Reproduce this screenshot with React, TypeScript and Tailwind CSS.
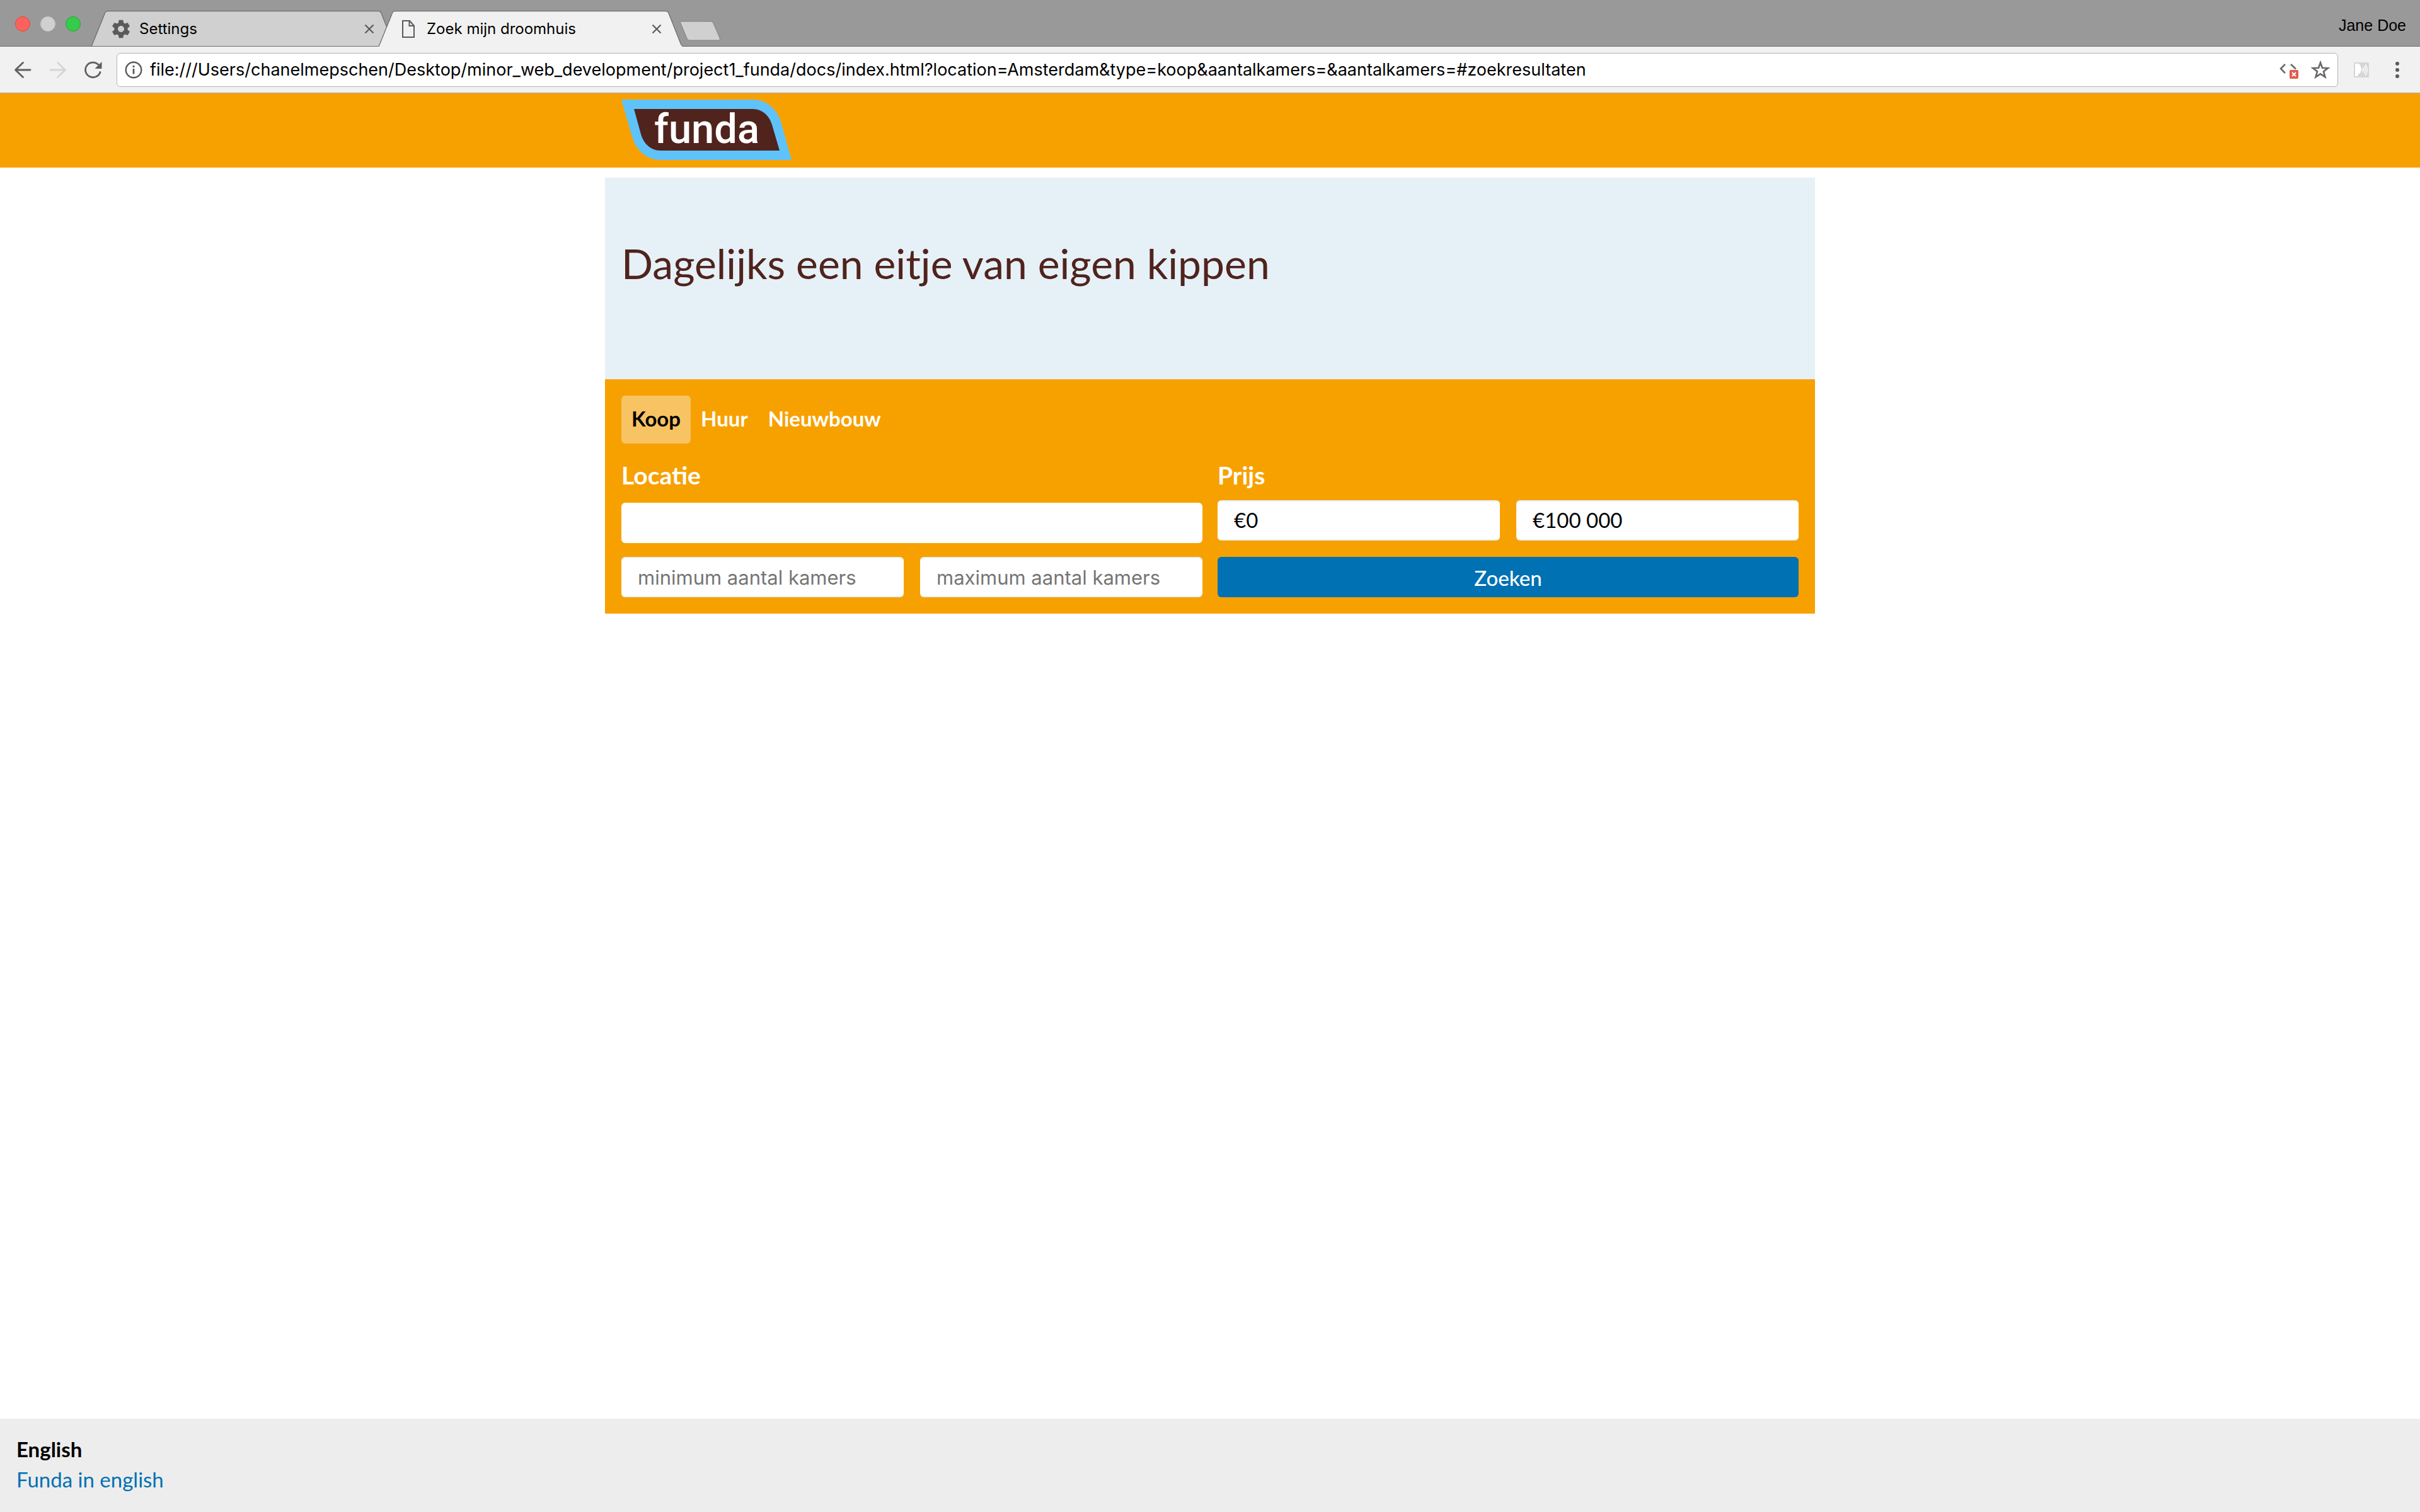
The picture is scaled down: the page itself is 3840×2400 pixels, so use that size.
import React from 'react';

const URL_TEXT =
  'file:///Users/chanelmepschen/Desktop/minor_web_development/project1_funda/docs/index.html?location=Amsterdam&type=koop&aantalkamers=&aantalkamers=#zoekresultaten';

function CloseIcon() {
  return (
    <svg className="size-4" viewBox="0 0 16 16" fill="none" stroke="#5a5a5a" strokeWidth="2.2" aria-hidden="true">
      <path d="M1.5 1.5 14.5 14.5M14.5 1.5 1.5 14.5" />
    </svg>
  );
}

function GearIcon() {
  return (
    <svg className="size-[34px]" viewBox="0 0 24 24" fill="#5a5a5a" aria-hidden="true">
      <path d="M19.43 12.98c.04-.32.07-.64.07-.98s-.03-.66-.07-.98l2.11-1.65c.19-.15.24-.42.12-.64l-2-3.46c-.12-.22-.39-.3-.61-.22l-2.49 1c-.52-.4-1.08-.73-1.69-.98l-.38-2.65C14.46 2.18 14.25 2 14 2h-4c-.25 0-.46.18-.49.42l-.38 2.65c-.61.25-1.17.59-1.69.98l-2.49-1c-.23-.09-.49 0-.61.22l-2 3.46c-.13.22-.07.49.12.64l2.11 1.65c-.04.32-.07.65-.07.98s.03.66.07.98l-2.11 1.65c-.19.15-.24.42-.12.64l2 3.46c.12.22.39.3.61.22l2.49-1c.52.4 1.08.73 1.69.98l.38 2.65c.03.24.24.42.49.42h4c.25 0 .46-.18.49-.42l.38-2.65c.61-.25 1.17-.59 1.69-.98l2.49 1c.23.09.49 0 .61-.22l2-3.46c.12-.22.07-.49-.12-.64l-2.11-1.65zM12 15.5c-1.93 0-3.5-1.57-3.5-3.5s1.57-3.5 3.5-3.5 3.5 1.57 3.5 3.5-1.57 3.5-3.5 3.5z" />
    </svg>
  );
}

function PageIcon() {
  return (
    <svg className="h-7 w-5" viewBox="0 0 20 28" fill="none" stroke="#5a5a5a" strokeWidth="2" aria-hidden="true">
      <path d="M1 1H12L19 9V27H1Z" />
      <path d="M11.5 1V9H19" />
    </svg>
  );
}

type TabProps = { title: string; icon: React.ReactNode; active?: boolean };

function BrowserTab({ title, icon, active }: TabProps) {
  return (
    <div className={active ? 'relative z-10 -ml-7 h-[57px] w-[484px]' : 'relative h-[57px] w-[484px]'}>
      <svg className="absolute inset-0 size-full" viewBox="0 0 484 57" aria-hidden="true">
        <path
          d="M0 57 C2 56 2 54 3 52 L22 5 C23 2 24 .5 28 .5 H456 C460 .5 460 2 461 4 L480 52 C481 54 482 56 484 57 Z"
          fill={active ? '#f1f1f1' : '#d0d0d0'}
        />
        <path
          d="M0 57 C2 56 2 54 3 52 L22 5 C23 2 24 .5 28 .5 H456 C460 .5 460 2 461 4 L480 52 C481 54 482 56 484 57"
          fill="none"
          stroke="#6e6e6e"
          strokeWidth="1.3"
        />
        {!active && <path d="M0 56.5H484" stroke="#6b6b6b" />}
      </svg>
      <div className="relative flex h-full items-center pr-[34px] pl-[31px]">
        <span className="mr-3 flex w-[34px] items-center justify-center">{icon}</span>
        <button type="button" className="flex-1 truncate text-left text-2xl text-black">
          {title}
        </button>
        <button type="button" aria-label={'Close ' + title}>
          <CloseIcon />
        </button>
      </div>
    </div>
  );
}

function TabStrip() {
  return (
    <div className="flex h-[74px] items-end border-b border-[#6b6b6b] bg-[#999999]">
      <div className="mb-[23px] ml-6 flex gap-4">
        <button type="button" aria-label="Close window" className="size-6 rounded-full border border-[#e2463f] bg-[#fc625d]" />
        <button type="button" aria-label="Minimize window" className="size-6 rounded-full border border-[#c4c4c4] bg-[#d0d0d0]" />
        <button type="button" aria-label="Zoom window" className="size-6 rounded-full border border-[#29a835] bg-[#35cb4b]" />
      </div>
      <div className="-mb-px ml-4 flex">
        <BrowserTab title="Settings" icon={<GearIcon />} />
        <BrowserTab title="Zoek mijn droomhuis" icon={<PageIcon />} active />
      </div>
      <button type="button" aria-label="New tab" className="mb-2 -ml-1.5">
        <svg className="h-8 w-[66px]" viewBox="0 0 66 32" aria-hidden="true">
          <path
            d="M3 1H49C52 1 53 2 54 4L64 27C65 30 64 31 62 31H17C14 31 13 30 12 28L2 4C1 2 1 1 3 1Z"
            fill="#d0d0d0"
            stroke="#808080"
          />
        </svg>
      </button>
      <span className="mr-[22px] mb-[17px] ml-auto font-['Liberation_Sans',sans-serif] text-[25px] leading-8 text-black">Jane Doe</span>
    </div>
  );
}

function Toolbar() {
  return (
    <div className="flex h-[74px] items-center border-b border-[#a9a9b1] bg-[#f1f1f1]">
      <div className="flex w-[185px] shrink-0 items-center gap-7 pl-[22px]">
        <button type="button" aria-label="Back">
          <svg className="size-7" viewBox="0 0 28 28" fill="none" stroke="#5f5f5f" strokeWidth="2.8" strokeLinecap="round" strokeLinejoin="round" aria-hidden="true">
            <path d="M14.5 2.5 2.5 14 14.5 25.5M3 14H26" />
          </svg>
        </button>
        <button type="button" aria-label="Forward" disabled>
          <svg className="size-7" viewBox="0 0 28 28" fill="none" stroke="#d5d5d5" strokeWidth="2.8" strokeLinecap="round" strokeLinejoin="round" aria-hidden="true">
            <path d="M13.5 2.5 25.5 14 13.5 25.5M25 14H2" />
          </svg>
        </button>
        <button type="button" aria-label="Reload">
          <svg className="size-7" viewBox="0 0 28 28" aria-hidden="true">
            <path d="M25 17.5A12 11.8 0 1 1 22 5.5" fill="none" stroke="#5f5f5f" strokeWidth="2.8" strokeLinecap="round" />
            <path d="M27.5 1V12H16.5Z" fill="#5f5f5f" />
          </svg>
        </button>
      </div>
      <div className="flex h-[54px] min-w-0 flex-1 items-center rounded-md border border-[#b4b4b4] bg-white px-3">
        <svg className="size-7 shrink-0" viewBox="0 0 28 28" aria-hidden="true">
          <circle cx="14" cy="14" r="12.3" fill="none" stroke="#5a5a5a" strokeWidth="2.4" />
          <path d="M14 12V20.5M14 7V10" stroke="#5a5a5a" strokeWidth="2.8" />
        </svg>
        <input
          aria-label="Address"
          defaultValue={URL_TEXT}
          className="ml-3 min-w-0 flex-1 bg-transparent text-[27px] leading-9 text-black outline-none"
        />
        <button type="button" aria-label="Scripts blocked">
          <svg className="h-7 w-[30px]" viewBox="0 0 30 28" fill="none" aria-hidden="true">
            <path d="M9 5 2 12 9 19" stroke="#6b6b6b" strokeWidth="2.6" />
            <path d="M18 5 26 12.5" stroke="#6b6b6b" strokeWidth="2.6" />
            <rect x="16" y="14" width="14" height="14" rx="2" fill="#e25b4c" />
            <path d="M20 18 26 24M26 18 20 24" stroke="#fff" strokeWidth="2" />
          </svg>
        </button>
        <button type="button" aria-label="Bookmark this page" className="ml-5">
          <svg className="size-[30px]" viewBox="0 0 30 30" fill="none" stroke="#666" strokeWidth="2.6" aria-hidden="true">
            <path d="M15 3.5 18 11.8 27 12.1 20 17.5 22.5 26.3 15 21.4 7.5 26.3 10 17.5 3 12.1 12 11.8Z" />
          </svg>
        </button>
      </div>
      <div className="flex shrink-0 items-center gap-10 pr-8 pl-6">
        <button type="button" aria-label="Reading extension">
          <svg className="size-[26px]" viewBox="0 0 26 26" aria-hidden="true">
            <rect x="1" y="1" width="24" height="24" rx="1.5" fill="#d6d6d6" />
            <path d="M3 3H8C11 4 12 6 12 9L14 13 12 14C12 18 11 19 8 19L7 23H3Z" fill="#fff" />
            <path d="M15 9.5Q17.5 13 15 16.5M17.5 7Q21 13 17.5 19M19.5 4.5Q25 13 19.5 21.5" fill="none" stroke="#fff" strokeWidth="1.5" />
          </svg>
        </button>
        <button type="button" aria-label="Menu">
          <svg className="h-[26px] w-2" viewBox="0 0 8 26" fill="#5a5a5a" aria-hidden="true">
            <circle cx="4" cy="3" r="3" />
            <circle cx="4" cy="13" r="3" />
            <circle cx="4" cy="23" r="3" />
          </svg>
        </button>
      </div>
    </div>
  );
}

function Logo() {
  return (
    <svg className="h-24 w-[270px]" viewBox="0 0 270 96" role="img" aria-label="funda">
      <path d="M0 0H208C231 0 247 16 253 35L270 96H64C38 96 23 79 17 59Z" fill="#5fc3f9" />
      <path d="M20 15H208C224 15 235 26 239 40L251 81H62C46 81 35 69 31 55Z" fill="#50231d" />
      <text x="52" y="69" fill="#fff" className="font-[Roboto,sans-serif] text-[65px] font-medium">
        funda
      </text>
    </svg>
  );
}

const KINDS = ['Koop', 'Huur', 'Nieuwbouw'];

const field =
  'h-16 w-full min-w-0 appearance-none rounded-md border-y-2 border-[#e6f1f7] bg-white px-[26px] outline-none';

const roomsField = field + ' font-[Inter,sans-serif] text-[31px] placeholder:text-[#757575]';

function SearchForm() {
  return (
    <form className="bg-[#f7a100] p-[26px]" onSubmit={(e) => e.preventDefault()}>
      <div role="radiogroup" aria-label="Type" className="mb-[26px] flex">
        {KINDS.map((kind) => (
          <label
            key={kind}
            className="rounded-md px-4 pt-3.5 pb-[18px] text-[33px] leading-[44px] font-bold text-white has-checked:bg-[#f8c363] has-checked:text-black"
          >
            <input type="radio" name="type" value={kind} defaultChecked={kind === 'Koop'} className="sr-only" />
            {kind}
          </label>
        ))}
      </div>
      <div className="grid grid-cols-2 gap-6">
        <div className="flex flex-col">
          <label htmlFor="location" className="mb-5 text-[39px] leading-[48px] font-bold text-white">
            Locatie
          </label>
          <input id="location" className="mb-[22px] h-16 w-full rounded-md bg-white px-[26px] font-[Inter,sans-serif] text-[31px] outline-none" />
          <div className="grid grid-cols-2 gap-[26px]">
            <input aria-label="minimum aantal kamers" placeholder="minimum aantal kamers" className={roomsField} />
            <input aria-label="maximum aantal kamers" placeholder="maximum aantal kamers" className={roomsField} />
          </div>
        </div>
        <div className="flex flex-col">
          <label htmlFor="price-from" className="mb-4 text-[39px] leading-[48px] font-bold text-white">
            Prijs
          </label>
          <div className="mb-[26px] grid grid-cols-2 gap-[26px]">
            <select id="price-from" className={field + ' text-[33px] text-black'}>
              <option>€0</option>
            </select>
            <select aria-label="Prijs tot" className={field + ' text-[33px] text-black'}>
              <option>€100 000</option>
            </select>
          </div>
          <button type="submit" className="h-16 rounded-md bg-[#0071b3] pt-1 text-[33px] font-medium text-white">
            Zoeken
          </button>
        </div>
      </div>
    </form>
  );
}

export default function App() {
  return (
    <div className="flex min-h-screen flex-col bg-white font-[Lato,sans-serif]">
      <div className="font-[Inter,sans-serif]">
        <TabStrip />
        <Toolbar />
      </div>
      <header className="bg-[#f7a100] pt-2.5 pb-3">
        <div className="mx-auto max-w-[1920px] px-[26px]">
          <a href="#home" className="flex">
            <Logo />
          </a>
        </div>
      </header>
      <main className="mx-auto mt-4 w-full max-w-[1920px]">
        <section className="bg-[#e6f1f7] px-[26px] pt-24 pb-36">
          <h1 className="text-[66px] leading-[80px] font-normal text-[#50231d]">Dagelijks een eitje van eigen kippen</h1>
        </section>
        <SearchForm />
      </main>
      <footer className="mt-auto bg-[#ededed] px-[26px] pt-6 pb-7 leading-[48px]">
        <h2 className="text-[33px] font-bold text-black">English</h2>
        <a href="#english" className="block text-[33px] text-[#0071b3]">
          Funda in english
        </a>
      </footer>
    </div>
  );
}
